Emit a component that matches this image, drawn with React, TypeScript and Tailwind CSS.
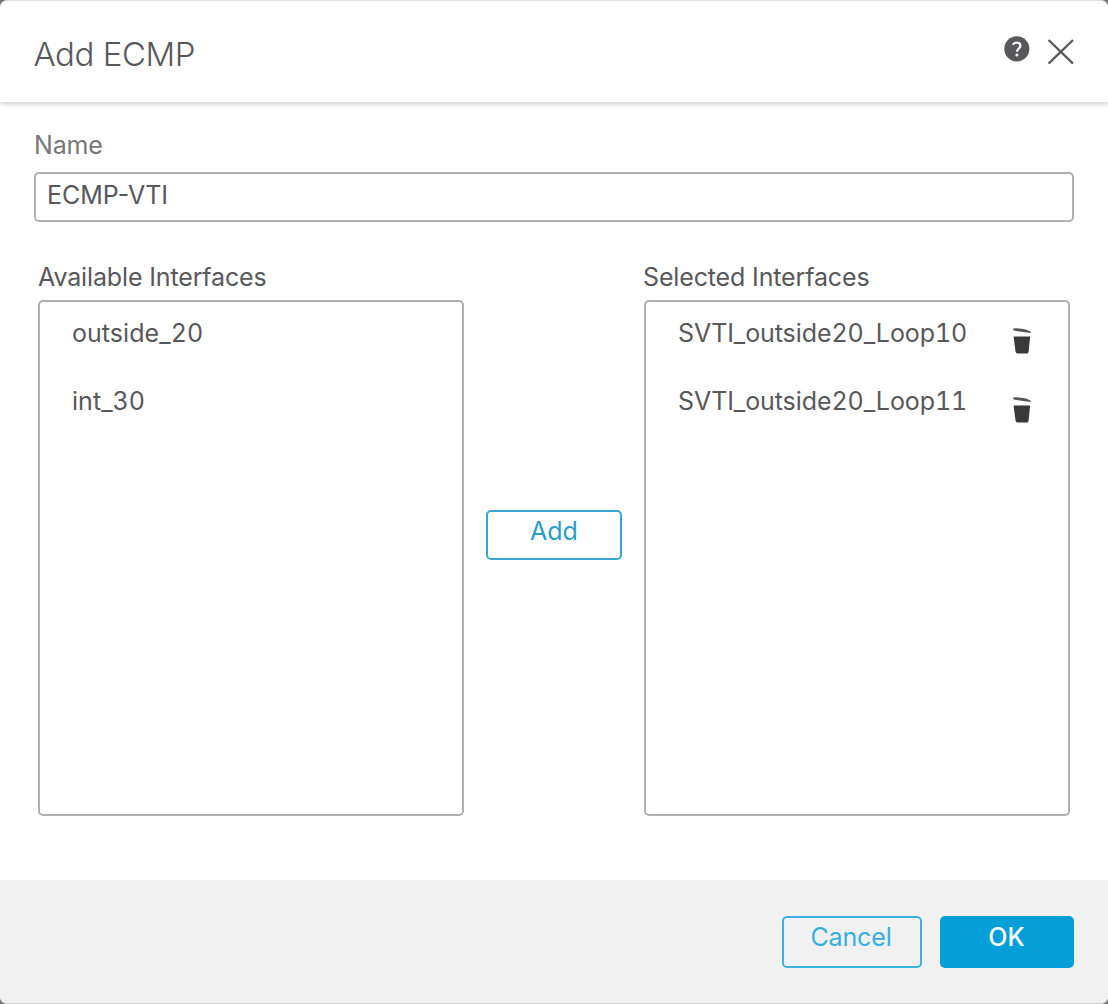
import React from "react";

const available = ["outside_20", "int_30"];
const selected = ["SVTI_outside20_Loop10", "SVTI_outside20_Loop11"];

function HelpIcon() {
  return (
    <svg width="26" height="26" viewBox="0 0 26 26" aria-label="Help">
      <circle cx="12.8" cy="12.8" r="12.6" fill="#58585b" />
      <path
        d="M8.8 8.8C9.7 7.1 11.1 6.7 12.7 6.7c2.3 0 3.7 1.1 3.7 3.1 0 2.9-3.4 2.9-3.4 6"
        fill="none"
        stroke="#f4f4f4"
        strokeWidth="2.3"
      />
      <circle cx="12.9" cy="18.9" r="1.5" fill="#f4f4f4" />
    </svg>
  );
}

function CloseIcon() {
  return (
    <svg width="26" height="26" viewBox="0 0 26 26" aria-label="Close">
      <path d="M0.6 2L25 25.6M25 2L0.6 25.6" stroke="#58585b" strokeWidth="2.3" fill="none" />
    </svg>
  );
}

function TrashIcon() {
  return (
    <svg width="20" height="26" viewBox="0 0 20 26" aria-label="Delete">
      <path d="M1 0.9Q1.4 0 4.5 0.2L9.5 0.7Q16.5 1.7 18.8 3.9L18.6 4.9L2 2.6Q0.7 1.9 1 0.9Z" fill="#55565a" />
      <path d="M1.6 8.5H18.2L16.6 23.4Q16.4 25.6 14.6 25.6H5.6Q3.8 25.6 3.5 23.6Z" fill="#39393b" />
    </svg>
  );
}

export default function App() {
  return (
    <div className="h-[1004px] w-[1108px] overflow-hidden bg-[#777] font-['Inter',sans-serif] text-[25px] leading-8 text-[#58585b]">
      <div className="flex h-full flex-col overflow-hidden rounded-[7px] border-y border-t-[#dedede] border-b-[#cfcfcf] bg-white">
        <header className="flex h-[101px] shrink-0 justify-between pl-[33.5px] pr-[34px] shadow-[0_2px_5px_rgba(0,0,0,0.2)]">
          <h1 className="mt-[33px] text-[33px] font-light leading-10 tracking-[-0.45px]">Add ECMP</h1>
          <div className="flex gap-[18px]">
            <button className="mt-[35px] h-[26px]"><HelpIcon /></button>
            <button className="mt-[37px] h-[26px]"><CloseIcon /></button>
          </div>
        </header>

        <main className="flex-1 px-[34px] pt-[27px]">
          <label className="block tracking-[-0.15px] text-[#77777a]">Name</label>
          <div className="mt-[11px] h-[50px] rounded-[5px] border-2 border-[#b0b0b0] pl-[11px] pt-[5px]">ECMP-VTI</div>

          <div className="mt-[39px] flex justify-between pl-1 pr-1">
            <section className="w-[426px]">
              <h2 className="tracking-[-0.14px]">Available Interfaces</h2>
              <ul className="mt-[7px] h-[516px] rounded-[5px] border-2 border-[#b0b0b0] pl-8 pt-[15px] tabular-nums tracking-[0.05px]">
                {available.map((n) => (
                  <li key={n} className="h-[68px]">{n}</li>
                ))}
              </ul>
            </section>
            <button className="mt-[249px] h-[50px] w-[136px] rounded-[5px] border-2 border-[#3aa5cf] pb-2 leading-[38px] text-[#2a9dca]">
              Add
            </button>
            <section className="w-[426px]">
              <h2 className="-ml-px tracking-[-0.14px]">Selected Interfaces</h2>
              <ul className="mt-[7px] h-[516px] rounded-[5px] border-2 border-[#b0b0b0] pl-8 pr-[36px] pt-[15px] tabular-nums tracking-[-0.08px]">
                {selected.map((n) => (
                  <li key={n} className="group flex h-[68px] justify-between">
                    <span>{n}</span>
                    <button className="mt-[11px] h-[26px] group-last:mt-3"><TrashIcon /></button>
                  </li>
                ))}
              </ul>
            </section>
          </div>
        </main>

        <footer className="flex h-[123px] shrink-0 justify-end gap-[18px] bg-[#f1f1f1] pr-[34px] pt-9">
          <button className="h-[52px] w-[140px] rounded-[5px] border-2 border-[#3cb2e0] pb-[9px] pr-[2px] leading-[39px] tracking-[-0.15px] text-[#35afe0]">
            Cancel
          </button>
          <button className="h-[52px] w-[134px] rounded-[5px] bg-[#049fd9] pb-[9px] pr-px font-medium leading-[43px] text-white">
            OK
          </button>
        </footer>
      </div>
    </div>
  );
}
